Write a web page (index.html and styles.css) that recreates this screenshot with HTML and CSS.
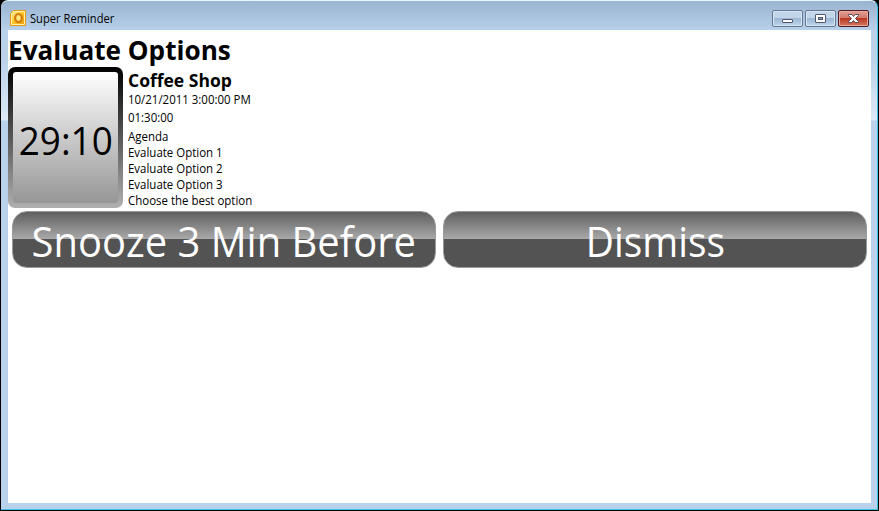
FILE: index.html
```html
<!DOCTYPE html>
<html lang="en">
<head>
<meta charset="utf-8">
<title>Super Reminder</title>
<link rel="stylesheet" href="styles.css">
</head>
<body>
<div class="window">
  <header class="titlebar">
    <svg class="app-icon" width="16" height="16" viewBox="0 0 16 16">
      <defs><linearGradient id="gold" x1="0" y1="0" x2="1" y2="1"><stop offset="0" stop-color="#fff6a0"/><stop offset=".5" stop-color="#fbc526"/><stop offset="1" stop-color="#e8930c"/></linearGradient></defs>
      <path d="M3.5.5h12v15H.5v-12z" fill="url(#gold)" stroke="#e5980f"/>
      <path d="M1.5 14.500V4L4 1.500h10.500V14.500z" fill="none" stroke="#fff3b0"/>
      <ellipse cx="8.500" cy="8" rx="3.300" ry="4" fill="#ffe680" stroke="#d47a05" stroke-width="2.200"/>
    </svg>
    <span class="caption fit">Super Reminder</span>
    <div class="controls">
      <div class="control"><svg width="29" height="15"><rect x="9.500" y="8.500" width="10" height="3" rx=".5" fill="#fff" stroke="#535666"/></svg></div>
      <div class="control"><svg width="29" height="15"><rect x="9.500" y="3.500" width="10" height="8" rx=".5" fill="#fff" stroke="#535666"/><rect x="12.500" y="6.500" width="4" height="2" fill="#8aa9c9" stroke="#535666"/></svg></div>
      <div class="control close"><svg width="29" height="15"><path d="M9.500 3.500h3.300l1.700 2 1.700-2h3.300v1l-3 3 3 3v1h-3.300l-1.700-2-1.700 2H9.500v-1l3-3-3-3z" fill="#fff" stroke="#5c4655"/></svg></div>
    </div>
  </header>
  <main class="content">
    <h1><span class="fit">Evaluate Options</span></h1>
    <section class="meeting">
      <div class="timer"><div class="face"><span class="fit">29:10</span></div></div>
      <div class="details">
        <h2><span class="fit">Coffee Shop</span></h2>
        <p class="date"><span class="fit">10/21/2011 3:00:00 PM</span></p>
        <p class="duration"><span class="fit">01:30:00</span></p>
        <p class="line"><span class="fit">Agenda</span></p>
        <p class="line"><span class="fit">Evaluate Option 1</span></p>
        <p class="line"><span class="fit">Evaluate Option 2</span></p>
        <p class="line"><span class="fit">Evaluate Option 3</span></p>
        <p class="line"><span class="fit">Choose the best option</span></p>
      </div>
    </section>
    <section class="actions">
      <button class="snooze"><span class="fit">Snooze 3 Min Before</span></button>
      <button class="dismiss"><span class="fit">Dismiss</span></button>
    </section>
  </main>
</div>
</body>
</html>
```
FILE: styles.css
```css
* { box-sizing: border-box; }
html, body { margin: 0; height: 100%; }
body { background: #000; font-family: "Open Sans", sans-serif; color: #000; overflow: hidden; }
h1, h2, p { margin: 0; }
.window {
  width: 877px;
  height: 510px;
  padding: 0 6px 6px 7px;
  border: 1px solid #39c1e0;
  border-top-color: #e8f5fc;
  border-width: 1px 1px 1px 0;
  border-radius: 7px 7px 0 0;
  margin-left: 1px;
  background: linear-gradient(#99b4d1, #b9d1ea 30px, #bcd3ea 60px, #dce9f7 119px, #b9d1ea 120px);
  display: flex;
  flex-direction: column;
}
.titlebar { height: 29px; flex: none; display: flex; align-items: flex-start; padding: 9px 2px 0; }
.fit { display: inline-block; transform-origin: 0 50%; white-space: nowrap; }
.caption { font-size: 12px; line-height: 16px; margin: 1px 0 0 4px; transform: scaleX(.93); }
.controls { display: flex; gap: 2px; margin-left: auto; }
.control {
  width: 31px; height: 17px;
  border: 1px solid #66788f;
  border-radius: 2px;
  background: linear-gradient(#c3d6e9 50%, #9cb8d4 50%, #bed5ec);
  box-shadow: inset 0 0 0 1px #d5e5f4;
}
.control svg { display: block; }
.close { border-color: #531c22; background: linear-gradient(#e2a093, #cf7767 50%, #b93721 50%, #d47a60); box-shadow: inset 0 0 0 1px #e5a99c; }
.content { flex: 1; background: #fff; min-height: 0; }
h1 { font-size: 27px; line-height: 37px; height: 37px; font-weight: 700; padding-top: 1px; }
h1 .fit { transform: scaleX(.968); }
.meeting { display: flex; height: 141px; }
.timer {
  width: 115px; height: 141px; padding: 5px; border-radius: 7px;
  background: linear-gradient(#000, #b0b0b0);
}
.face {
  height: 131px; border-radius: 3px;
  background: linear-gradient(#fff, #969696);
  display: flex; align-items: center; justify-content: center;
  font-size: 39px; padding-top: 3px;
}
.face .fit { transform-origin: 50% 50%; transform: scaleX(.945); }
.details { padding: 2px 0 0 5px; font-size: 12px; line-height: 16px; }
.details p .fit { transform: scaleX(.955); }
h2 { font-size: 17.500px; line-height: 22px; height: 23px; font-weight: 700; }
.date, .duration { height: 18px; }
.duration { margin-bottom: 1px; }
.line { height: 16px; }
.actions { display: grid; grid-template-columns: 1fr 1fr; gap: 7px; padding: 3px 4px; }
button {
  height: 57px; padding: 4px 0 0; border: 1px solid #999; border-radius: 15px;
  background: linear-gradient(#5c5c5c, #aaa 50%, #535353 50%);
  background-origin: border-box;
  font-family: inherit; font-size: 41.500px; line-height: 51px; color: #fff;
}
button .fit { transform-origin: 50% 50%; transform: scaleX(.962); }
.dismiss .fit { transform: scaleX(.935); }
```
